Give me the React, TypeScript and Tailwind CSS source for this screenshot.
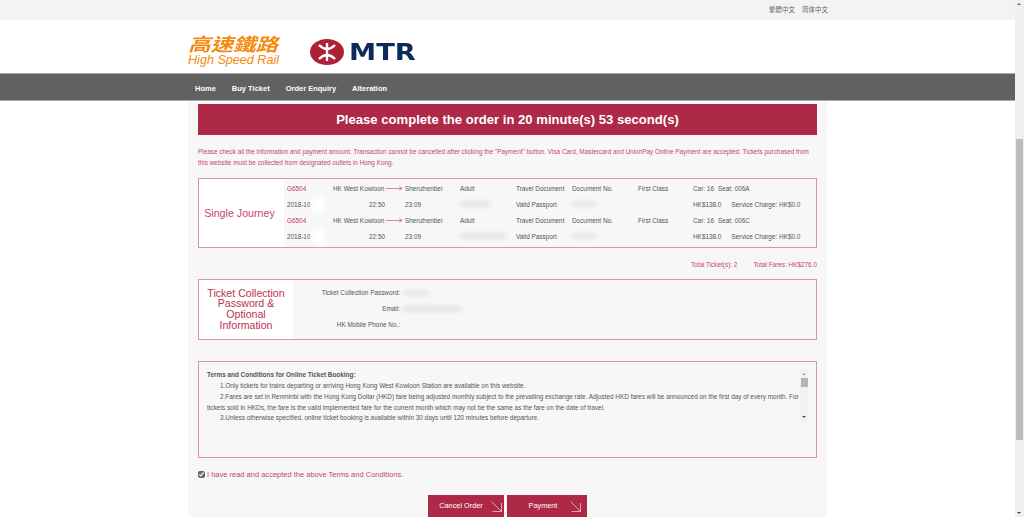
import type { ReactNode } from 'react';

const sans = "font-['Liberation_Sans',Arial,sans-serif]";

function Smudge(props: { w: number; cls: string }) {
  return (
    <span className={`inline-block h-[6px] rounded-full blur-[2px] ${props.cls}`} style={{ width: props.w }} />
  );
}

function ArrowIcon(props: { className: string }) {
  return (
    <svg width="11" height="11" viewBox="0 0 11 11" className={`absolute top-[6px] ${props.className}`}>
      <path d="M.5 .5L10.5 10.5M10.5 2V10.5H1.5" fill="none" stroke="#e9c3cc" strokeWidth="0.8" />
    </svg>
  );
}

function TicketRows(props: { seat: string; blurName: number; blurDoc: number }) {
  return (
    <>
      <div className="grid h-[16px] grid-cols-[46px_72px_55px_56px_56px_66px_55px_1fr] items-center">
        <span className="text-[#c23a5a]">G6504</span>
        <span className="flex items-center whitespace-nowrap">
          HK West Kowloon
          <svg width="17" height="5" viewBox="0 0 17 5" className="ml-[2px] shrink-0">
            <path d="M0 2.5H16M13 .5L16 2.5L13 4.5" fill="none" stroke="#c9566f" strokeWidth="0.7" />
          </svg>
        </span>
        <span>Shenzhenbei</span>
        <span>Adult</span>
        <span className="whitespace-nowrap">Travel Document</span>
        <span>Document No.</span>
        <span>First Class</span>
        <span className="flex gap-[4px] whitespace-nowrap">
          <span>Car: 16</span>
          <span>Seat: {props.seat}</span>
        </span>
      </div>
      <div className="grid h-[16px] grid-cols-[46px_72px_55px_56px_56px_66px_55px_1fr] items-center">
        <span className="relative">
          2018-10
          <span className="absolute left-[25px] top-[-3px] h-[16px] w-[13px] bg-white blur-[2px]" />
        </span>
        <span className="pr-[20px] text-right">22:50</span>
        <span>23:09</span>
        <span className="flex"><Smudge w={props.blurName} cls="bg-[#e3e3e3]" /></span>
        <span>Valid Passport</span>
        <span className="flex"><Smudge w={props.blurDoc} cls="bg-[#e6e6e6]" /></span>
        <span />
        <span className="flex gap-[10px] whitespace-nowrap">
          <span>HK$138.0</span>
          <span>Service Charge: HK$0.0</span>
        </span>
      </div>
    </>
  );
}

function Box(props: { className: string; children: ReactNode }) {
  return <div className={`border border-[#dc93a4] ${props.className}`}>{props.children}</div>;
}

export default function App() {
  return (
    <div className={`flex h-[517px] w-full overflow-hidden bg-white ${sans}`}>
      <div className="min-w-0 flex-1">
        <div className="flex h-[20px] items-center justify-end gap-[7px] bg-[#f3f3f3] pr-[187px] font-['Noto_Sans_CJK_TC',sans-serif] text-[6.5px] text-[#666]">
          <span>繁體中文</span>
          <span>简体中文</span>
        </div>

        <div className="mx-auto flex h-[53px] w-[639px] items-start">
          <div className="mt-[13px] w-[92px] italic text-[#f58a12]">
            <div className="h-[21px] origin-left scale-x-[1.25] whitespace-nowrap font-['Noto_Sans_CJK_TC',sans-serif] text-[18px] leading-[21px] font-bold">高速鐵路</div>
            <div className="whitespace-nowrap text-[12.6px] leading-[12px]">High Speed Rail</div>
          </div>
          <div className="mt-[19px] ml-[30px] flex items-center">
            <svg width="34" height="26" viewBox="0 0 34 26">
              <ellipse cx="17" cy="13" rx="17" ry="13" fill="#ae2036" />
              <path d="M17 4V22" fill="none" stroke="#fff" strokeWidth="2.4" />
              <path d="M9 6Q17 14 25 6M9 20Q17 12 25 20" fill="none" stroke="#fff" strokeWidth="2.4" />
            </svg>
            <span className="ml-[5px] inline-block origin-left scale-x-[1.16] font-['DejaVu_Sans',sans-serif] text-[23.5px] leading-[26px] font-bold text-[#0d2a5b]">MTR</span>
          </div>
        </div>

        <div className="flex h-[28px] items-center gap-[16px] border-y border-[#aaa] bg-[#616161] pt-[3px] pl-[195px] text-[7.5px] font-bold text-white">
          <span>Home</span>
          <span>Buy Ticket</span>
          <span>Order Enquiry</span>
          <span>Alteration</span>
        </div>

        <div className="mx-auto h-[416px] w-[639px] bg-[#f7f7f7] px-[10px] pt-[3px] text-[6.4px] text-[#555]">
          <div className="flex h-[31px] items-center justify-center bg-[#ae2947] text-[13.1px] font-bold text-white">
            Please complete the order in 20 minute(s) 53 second(s)
          </div>

          <p className="mt-[12px] leading-[10.7px] text-[#c2486a]">
            Please check all the information and payment amount. Transaction cannot be cancelled after clicking the "Payment" button. Visa Card, Mastercard and UnionPay Online Payment are accepted. Tickets purchased from this website must be collected from designated outlets in Hong Kong.
          </p>

          <Box className="mt-[10px] flex h-[70px]">
            <div className="flex w-[85px] items-center justify-center bg-white pr-[4px] text-[10.7px] text-[#c2486a]">
              Single Journey
            </div>
            <div className="flex-1 py-[1px] pl-[3px]">
              <TicketRows seat="006A" blurName={30} blurDoc={24} />
              <TicketRows seat="006C" blurName={46} blurDoc={24} />
            </div>
          </Box>

          <div className="mt-[11px] flex h-[10px] items-center justify-end gap-[16px] text-[#c2486a]">
            <span>Total Ticket(s): 2</span>
            <span>Total Fares: HK$276.0</span>
          </div>

          <Box className="mt-[10px] flex h-[61px]">
            <div className="flex w-[94px] items-center justify-center bg-white pb-[2px] text-center text-[10.6px] leading-[10.7px] text-[#b8324f]">
              Ticket Collection Password &amp; Optional Information
            </div>
            <div className="w-[107px] pt-[5px] text-right">
              <div className="h-[16px] leading-[16px]">Ticket Collection Password:</div>
              <div className="h-[16px] leading-[16px]">Email:</div>
              <div className="h-[16px] leading-[16px]">HK Mobile Phone No.:</div>
            </div>
            <div className="flex flex-col pt-[5px] pl-[3px]">
              <div className="flex h-[16px] items-center"><Smudge w={26} cls="bg-[#e6e6e6]" /></div>
              <div className="flex h-[16px] items-center"><Smudge w={58} cls="bg-[#e3e3e3]" /></div>
            </div>
          </Box>

          <Box className="relative mt-[21px] h-[97px] pt-[8px] pr-[15px] pl-[8px] leading-[10.7px]">
            <div className="font-bold">Terms and Conditions for Online Ticket Booking:</div>
            <div className="indent-[13px]">1.Only tickets for trains departing or arriving Hong Kong West Kowloon Station are available on this website.</div>
            <div className="indent-[13px]">2.Fares are set in Renminbi with the Hong Kong Dollar (HKD) fare being adjusted monthly subject to the prevailing exchange rate. Adjusted HKD fares will be announced on the first day of every month. For tickets sold in HKDs, the fare is the valid implemented fare for the current month which may not be the same as the fare on the date of travel.</div>
            <div className="indent-[13px]">3.Unless otherwise specified, online ticket booking is available within 30 days until 120 minutes before departure.</div>
            <div className="absolute top-[7px] right-[8px] flex h-[53px] w-[8px] flex-col items-center bg-[#f1f1f1]">
              <span className="mt-[4px] h-0 w-0 border-x-[2px] border-b-[2px] border-x-transparent border-b-[#a3a3a3]" />
              <span className="mt-[3px] h-[9px] w-[7px] bg-[#b5b5b5]" />
              <span className="mt-auto mb-[4px] h-0 w-0 border-x-[2px] border-t-[2px] border-x-transparent border-t-[#505050]" />
            </div>
          </Box>

          <label className="mt-[11px] flex h-[10px] items-center gap-[2px] text-[7.5px] text-[#c2486a]">
            <input type="checkbox" defaultChecked className="m-0 h-[7px] w-[7px] accent-[#666]" />
            I have read and accepted the above Terms and Conditions.
          </label>

          <div className="mt-[16px] flex justify-center gap-[3px] text-[7.3px] text-white">
            <button className="relative h-[22px] w-[76px] bg-[#ae2947] pr-[10px]">
              Cancel Order
              <ArrowIcon className="right-[2px]" />
            </button>
            <button className="relative h-[22px] w-[80px] bg-[#ae2947] pr-[8px]">
              Payment
              <ArrowIcon className="right-[6px]" />
            </button>
          </div>
        </div>
      </div>

      <div className="relative w-[9px] shrink-0 bg-[#f0f0f0]">
        <span className="absolute top-[3px] left-[2px] h-0 w-0 border-x-[2px] border-b-[2px] border-x-transparent border-b-[#666]" />
        <div className="absolute top-[139px] left-[1px] h-[301px] w-[7px] bg-[#bdbdbd]" />
        <span className="absolute bottom-[3px] left-[2px] h-0 w-0 border-x-[2px] border-t-[2px] border-x-transparent border-t-[#444]" />
      </div>
    </div>
  );
}
